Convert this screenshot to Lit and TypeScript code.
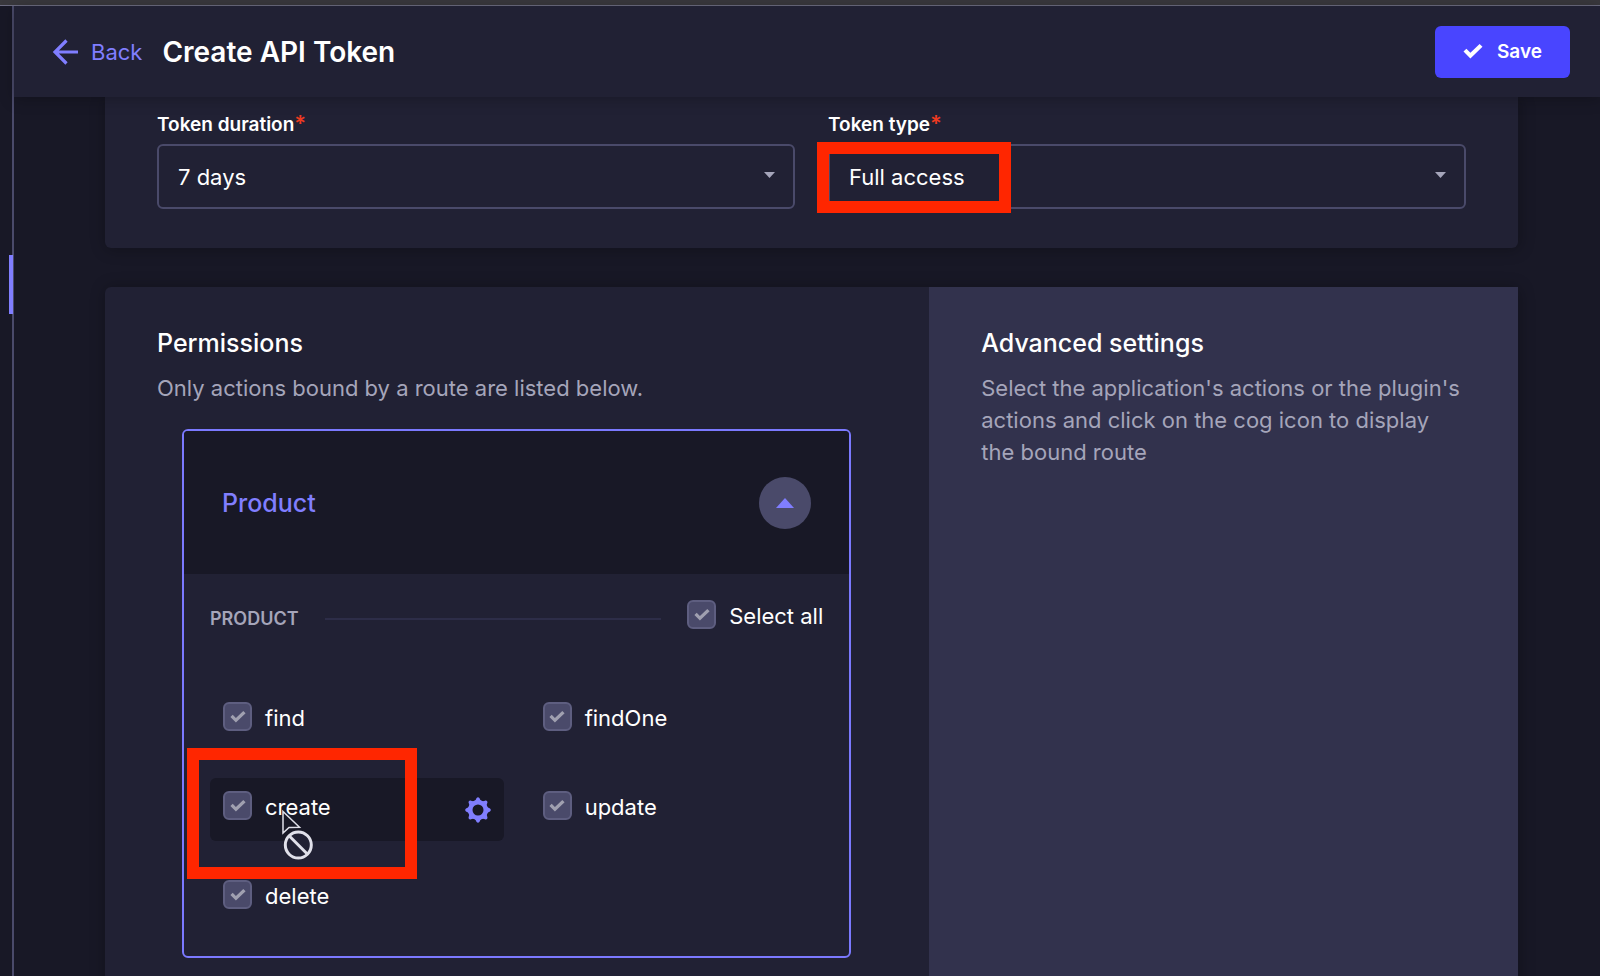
import { LitElement, html, css, svg } from "lit";
import { customElement, property } from "lit/decorators.js";

const check = svg`<path d="M.5 7.600 3.400 4.700 7.400 8.700 16.600 0 19.500 2.800 7.400 14.500z" />`;

@customElement("permission-checkbox")
class PermissionCheckbox extends LitElement {
  @property() label = "";

  static styles = css`
    :host {
      display: block;
    }
    label {
      display: flex;
      align-items: flex-start;
      gap: 13px;
      color: #ffffff;
      font-size: 22px;
      line-height: 32px;
    }
    .box {
      display: grid;
      flex: none;
      place-items: center;
    }
    input {
      grid-area: 1 / 1;
      appearance: none;
      box-sizing: border-box;
      width: 29px;
      height: 29px;
      margin: 0;
      border: 2px solid #5e5e80;
      border-radius: 6px;
      background: #4a4a6a;
    }
    svg {
      grid-area: 1 / 1;
      width: 16px;
      height: 12px;
      fill: #a0a0b0;
      pointer-events: none;
    }
  `;

  render() {
    return html`<label>
      <span class="box">
        <input type="checkbox" checked disabled />
        <svg viewBox="0 0 20 15" aria-hidden="true">${check}</svg>
      </span>
      ${this.label}
    </label>`;
  }
}

@customElement("app-root")
class AppRoot extends LitElement {
  static styles = css`
    :host {
      display: block;
      height: 100vh;
      overflow: hidden;
      background: #181826;
      color: #ffffff;
      font-family: Inter, "Liberation Sans", sans-serif;
      font-size: 22px;
      line-height: 32px;
    }
    * {
      box-sizing: border-box;
    }
    h1,
    h2,
    h3,
    p {
      margin: 0;
    }
    .page {
      display: flex;
      flex-direction: column;
      height: 100%;
    }
    .chrome {
      flex: none;
      height: 6px;
      background: #39383d;
      border-bottom: 1px solid #6c6c80;
    }
    .shell {
      display: flex;
      flex: 1;
      min-height: 0;
    }
    .rail {
      flex: none;
      width: 14px;
      padding-top: 249px;
      border-right: 2px solid #4a4a6a;
    }
    .active {
      width: 4px;
      height: 59px;
      margin-left: 9px;
      background: #807eff;
    }
    main {
      flex: 1;
      min-width: 0;
    }
    header {
      position: relative;
      display: flex;
      align-items: center;
      height: 91px;
      padding: 0 30px 0 38px;
      background: #212134;
      box-shadow: 0 2px 14px rgba(3, 3, 5, 0.25);
    }
    .back {
      display: flex;
      align-items: center;
      gap: 13px;
      color: #807eff;
      text-decoration: none;
    }
    .back svg {
      width: 26px;
      height: 26px;
      fill: none;
      stroke: currentColor;
      stroke-width: 3.2;
    }
    h1 {
      flex: 1;
      margin-left: 20px;
      font-size: 28px;
      font-weight: 600;
      line-height: 36px;
    }
    .save {
      display: flex;
      align-items: center;
      gap: 14px;
      height: 52px;
      padding: 0 28px;
      border: 0;
      border-radius: 6px;
      background: #4945ff;
      color: #ffffff;
      font: inherit;
      font-size: 19px;
      font-weight: 600;
    }
    .save svg {
      width: 20px;
      height: 15px;
      fill: currentColor;
    }
    .content {
      display: flex;
      flex-direction: column;
      gap: 39px;
      padding: 0 82px 0 91px;
    }
    .card {
      border-radius: 6px;
      background: #212134;
      box-shadow: 1px 1px 16px rgba(3, 3, 5, 0.3);
    }
    .details {
      display: grid;
      grid-template-columns: 1fr 1fr;
      gap: 33px;
      padding: 15px 52px 39px;
      border-top-left-radius: 0;
      border-top-right-radius: 0;
    }
    .field {
      display: flex;
      flex-direction: column;
      gap: 6px;
    }
    .field label {
      font-size: 19px;
      font-weight: 600;
      line-height: 26px;
    }
    .req {
      color: #ee3a20;
      font-size: 22px;
      line-height: 20px;
    }
    .control {
      position: relative;
      display: grid;
      align-items: center;
    }
    .control select {
      grid-area: 1 / 1;
      appearance: none;
      width: 100%;
      height: 65px;
      padding: 0 52px 0 19px;
      border: 2px solid #4a4a6a;
      border-radius: 6px;
      background: #212134;
      color: #ffffff;
      font: inherit;
    }
    .control svg {
      grid-area: 1 / 1;
      justify-self: end;
      width: 11px;
      height: 6px;
      margin-right: 20px;
      margin-bottom: 4px;
      fill: #a5a5ba;
      pointer-events: none;
    }
    .mark {
      position: absolute;
      border: 12px solid #ff2600;
      pointer-events: none;
    }
    .mark-type {
      left: -11px;
      top: -2px;
      width: 194px;
      height: 71px;
    }
    .mark-create {
      left: -23px;
      top: -30px;
      width: 230px;
      height: 131px;
    }
    .permissions {
      display: grid;
      grid-template-columns: 7fr 5fr;
    }
    .list,
    .advanced {
      padding: 39px 52px 52px;
    }
    .advanced {
      background: #32324d;
    }
    h2 {
      font-size: 25px;
      font-weight: 500;
      line-height: 34px;
    }
    .hint {
      margin-top: 12px;
      color: #a5a5ba;
    }
    .accordion {
      margin: 25px 26px 0 25px;
      border: 2px solid #7b79ff;
      border-radius: 6px;
      overflow: hidden;
    }
    .head {
      display: flex;
      align-items: center;
      justify-content: space-between;
      height: 143px;
      padding: 0 38px;
      background: #181826;
    }
    h3 {
      color: #807eff;
      font-size: 25px;
      font-weight: 500;
    }
    .toggle {
      display: grid;
      place-items: center;
      width: 52px;
      height: 52px;
      padding: 0;
      border: 0;
      border-radius: 50%;
      background: #4a4a6a;
    }
    .toggle svg {
      width: 18px;
      height: 10px;
      fill: #807eff;
    }
    .group {
      display: flex;
      align-items: flex-end;
      gap: 26px;
      padding: 26px 26px 0;
    }
    .legend {
      display: flex;
      flex: 1;
      align-items: center;
      gap: 26px;
    }
    .name {
      color: #a5a5ba;
      font-size: 18px;
      font-weight: 600;
      line-height: 26px;
    }
    .rule {
      flex: 1;
      height: 2px;
      background: #2d2d48;
    }
    .actions {
      display: grid;
      grid-template-columns: 1fr 1fr;
      gap: 26px;
      padding: 57px 26px 26px;
    }
    .action {
      position: relative;
      display: flex;
      justify-content: space-between;
      height: 63px;
      padding: 13px;
      border-radius: 6px;
    }
    .hover {
      background: #181826;
    }
    .cog {
      display: flex;
      align-items: center;
      padding: 0;
      border: 0;
      background: none;
    }
    .cog svg {
      width: 26px;
      height: 26px;
      fill: #807eff;
    }
    .cursor {
      position: absolute;
      left: 70px;
      top: 29px;
      width: 36px;
      height: 54px;
    }
  `;

  private select(id: string, label: string, value: string, marked = false) {
    return html`<div class="field">
      <label for=${id}>${label}<span class="req">*</span></label>
      <div class="control">
        <select id=${id}>
          <option>${value}</option>
        </select>
        <svg viewBox="0 0 10 6" preserveAspectRatio="none" aria-hidden="true"><path d="M0 0h10L5 6z" /></svg>
        ${marked ? html`<div class="mark mark-type"></div>` : ""}
      </div>
    </div>`;
  }

  private cog() {
    const teeth = [0, 45, 90, 135, 180, 225, 270, 315].map(
      (a) => svg`<path d="M8.800 4.500Q11 3.200 11.600 1Q13-.6 14.400 1Q15 3.200 17.200 4.500z" transform="rotate(${a} 13 13)" />`
    );
    return html`<button class="cog" aria-label="Show bound route">
      <svg viewBox="0 0 26 26">
        ${teeth}
        <path fill-rule="evenodd" d="M13 3a10 10 0 1 0 0 20a10 10 0 1 0 0-20zM13 7.500a5.500 5.500 0 1 1 0 11a5.500 5.500 0 1 1 0-11z" />
      </svg>
    </button>`;
  }

  private action(name: string) {
    const hovered = name === "create";
    return html`<div class="action ${hovered ? "hover" : ""}">
      <permission-checkbox label=${name}></permission-checkbox>
      ${hovered
        ? html`${this.cog()}
            <svg class="cursor" viewBox="0 0 36 54" aria-hidden="true">
              <path d="M3 4.500v21.500l6-5.500 10.500-.3z" fill="#181826" stroke="#e0e0ea" stroke-width="1.500" />
              <circle cx="18.300" cy="38" r="14.800" fill="#181826" />
              <circle cx="18.300" cy="38" r="13" fill="#212134" stroke="#e0e0ea" stroke-width="3" />
              <path d="M9.300 29 27.300 47" stroke="#e0e0ea" stroke-width="3" />
            </svg>
            <div class="mark mark-create"></div>`
        : ""}
    </div>`;
  }

  render() {
    return html`<div class="page">
      <div class="chrome"></div>
      <div class="shell">
        <div class="rail"><div class="active"></div></div>
        <main>
          <header>
            <a class="back" href="#">
              <svg viewBox="0 0 26 26" aria-hidden="true"><path d="M26 13H3M14.500 1.500 3 13l11.500 11.500" /></svg>
              Back
            </a>
            <h1>Create API Token</h1>
            <button class="save">
              <svg viewBox="0 0 20 15" aria-hidden="true">${check}</svg>
              Save
            </button>
          </header>
          <div class="content">
            <section class="card details">
              ${this.select("duration", "Token duration", "7 days")}
              ${this.select("type", "Token type", "Full access", true)}
            </section>
            <section class="card permissions">
              <div class="list">
                <h2>Permissions</h2>
                <p class="hint">Only actions bound by a route are listed below.</p>
                <div class="accordion">
                  <div class="head">
                    <h3>Product</h3>
                    <button class="toggle" aria-label="Collapse Product">
                      <svg viewBox="0 0 18 10"><path d="M9 0 18 10H0z" /></svg>
                    </button>
                  </div>
                  <div class="group">
                    <div class="legend">
                      <span class="name">PRODUCT</span>
                      <span class="rule"></span>
                    </div>
                    <permission-checkbox label="Select all"></permission-checkbox>
                  </div>
                  <div class="actions">
                    ${["find", "findOne", "create", "update", "delete"].map((n) => this.action(n))}
                  </div>
                </div>
              </div>
              <aside class="advanced">
                <h2>Advanced settings</h2>
                <p class="hint">
                  Select the application's actions or the plugin's actions and click on the cog icon to display the bound route
                </p>
              </aside>
            </section>
          </div>
        </main>
      </div>
    </div>`;
  }
}
